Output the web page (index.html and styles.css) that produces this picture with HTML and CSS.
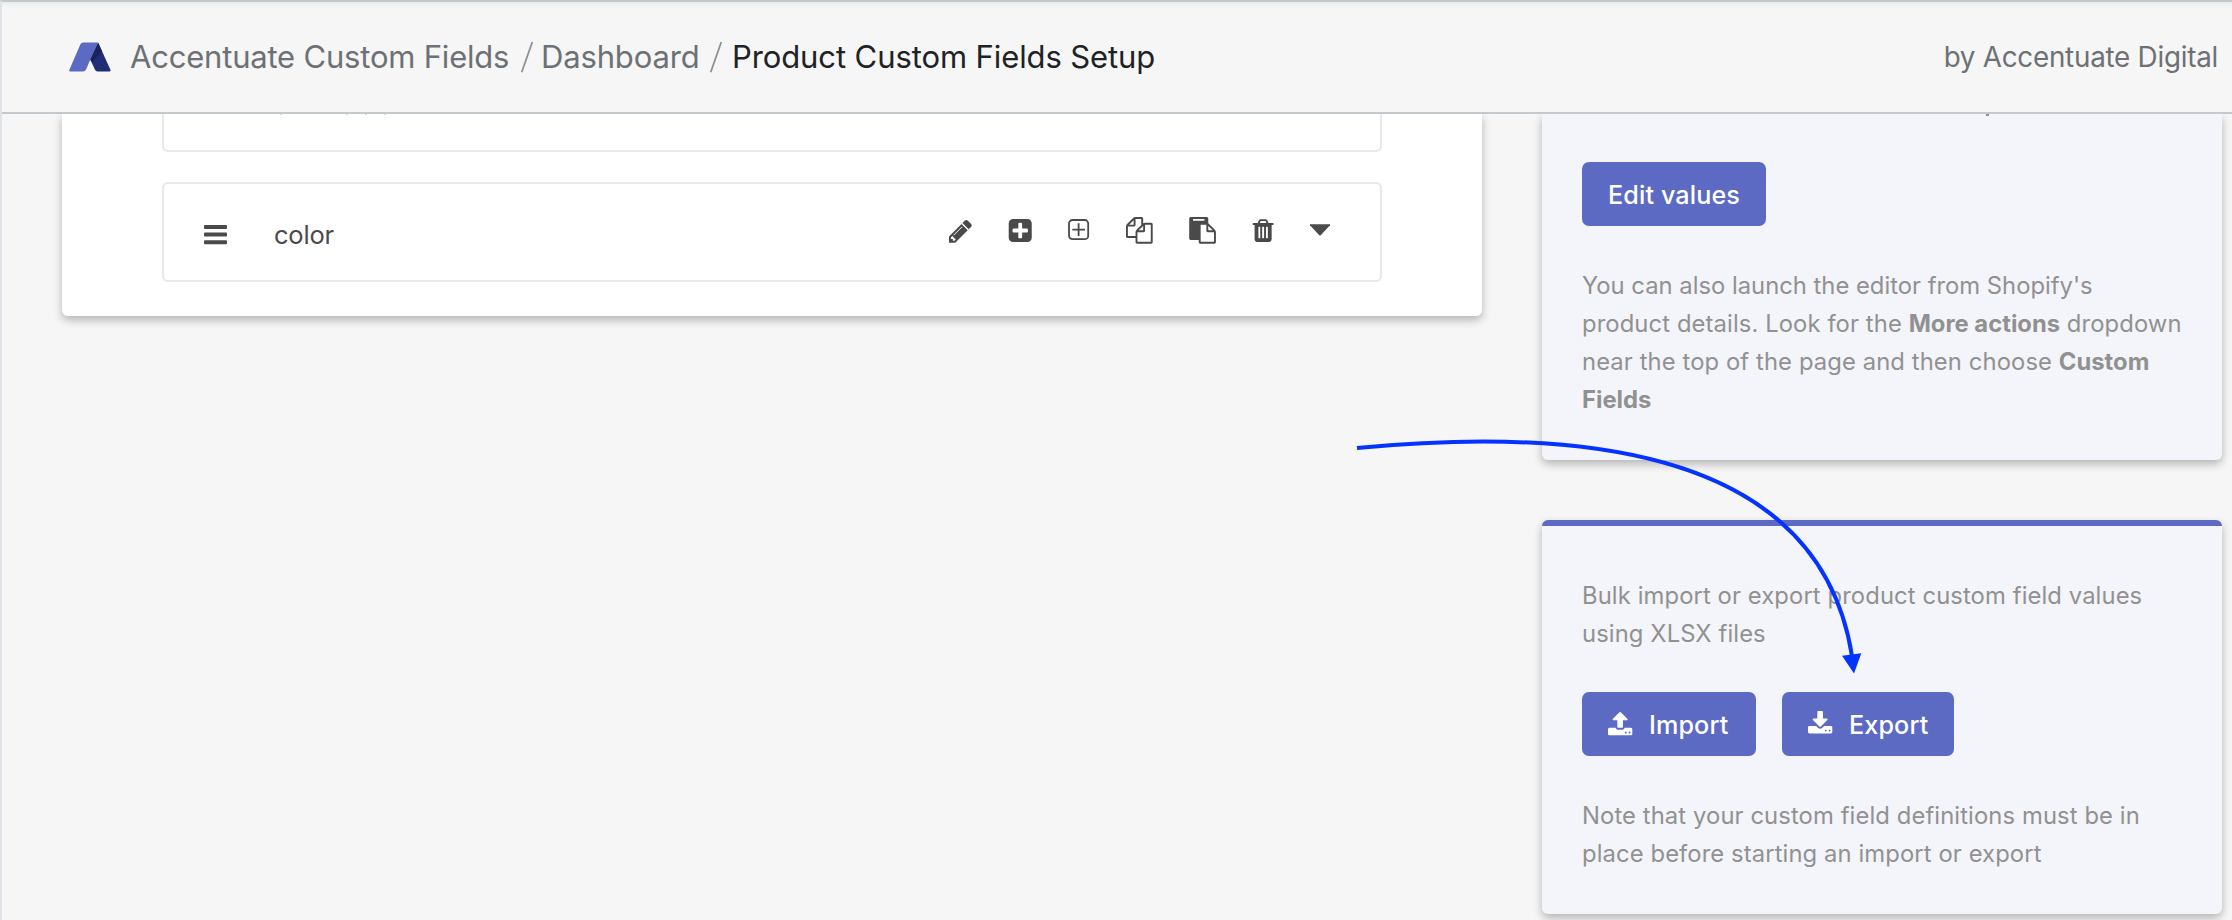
FILE: index.html
```
<!DOCTYPE html>
<html lang="en">
<head>
<meta charset="utf-8">
<title>Product Custom Fields Setup</title>
<link rel="stylesheet" href="styles.css">
</head>
<body>
<div class="app">
  <header class="topbar">
    <svg class="logo" width="44" height="32" viewBox="0 0 44 32">
      <path fill="#5c6ac4" d="M15.4 1.5H30.2L22.3 18.5 18.2 28.2Q17.2 30.5 15 30.5H2.8Q.6 30.5 1.5 28.4L12.3 3.600Q13.200 1.500 15.400 1.500Z"/>
      <path fill="#202e78" d="M30.200 1.800L42.300 28.400Q43.200 30.500 41 30.500H29.500Q27.800 30.500 27 28.700L22.300 18.500Z"/>
      <path fill="#1c2260" d="M30.200 1.800L34.200 10.800L23.600 21.300L22.300 18.500Z"/>
    </svg>
    <nav class="crumbs">
      <a class="crumb crumb-app">Accentuate Custom Fields</a>
      <svg class="slash" width="14" height="34" viewBox="0 0 14 34"><path d="M12.300 2L1.700 32.300"/></svg>
      <a class="crumb crumb-dash">Dashboard</a>
      <svg class="slash" width="14" height="34" viewBox="0 0 14 34"><path d="M12.300 2L1.700 32.300"/></svg>
      <span class="crumb current">Product Custom Fields Setup</span>
    </nav>
    <span class="vendor">by Accentuate Digital</span>
  </header>

  <main class="content">
    <section class="fields-card">
      <div class="field-row clipped"><i></i><i></i><i></i><i></i></div>
      <div class="field-row">
        <svg class="drag" width="23" height="20" viewBox="0 0 23 20"><rect width="23" height="4" rx="1"/><rect y="7.600" width="23" height="4" rx="1"/><rect y="15.200" width="23" height="4" rx="1"/></svg>
        <span class="field-name">color</span>
        <div class="tools">
          <svg viewBox="0 0 32 32"><path transform="translate(4 3.800) scale(.015)" d="M363 1536l91-91-235-235-91 91v107h128v128h107zM886 608q0-22-22-22-10 0-17 7l-542 542q-7 7-7 17 0 22 22 22 10 0 17-7l542-542q7-7 7-17zM832 416l416 416-832 832h-416v-416zM1515 512q0 53-37 90l-166 166-416-416 166-165q36-38 90-38 53 0 91 38l235 234q37 39 37 91z"/></svg>
          <svg viewBox="0 0 32 32"><path transform="translate(4.700 3.100) scale(.015)" d="M1280 960v-128q0-26-19-45t-45-19h-320v-320q0-26-19-45t-45-19h-128q-26 0-45 19t-19 45v320h-320q-26 0-45 19t-19 45v128q0 26 19 45t45 19h320v320q0 26 19 45t45 19h128q26 0 45-19t19-45v-320h320q26 0 45-19t19-45zM1536 416v960q0 119-84.500 203.500t-203.500 84.500h-960q-119 0-203.500-84.500t-84.500-203.500v-960q0-119 84.500-203.500t203.500-84.500h960q119 0 203.500 84.500t84.500 203.500z"/></svg>
          <svg viewBox="0 0 32 32"><g fill="none" stroke="#4a4a4a" stroke-width="1.800"><rect x="6" y="6" width="19.200" height="19.200" rx="3.500"/><path d="M9.300 15.600H22M15.600 9.300V22"/></g></svg>
          <svg viewBox="0 0 32 32"><path transform="translate(3 3) scale(.0149)" d="M1696 384q40 0 68 28t28 68v1216q0 40-28 68t-68 28h-960q-40 0-68-28t-28-68v-288h-544q-40 0-68-28t-28-68v-672q0-40 20-88t48-76l408-408q28-28 76-48t88-20h416q40 0 68 28t28 68v328q68-40 128-40h416zM1152 597l-299 299h299v-299zM512 213l-299 299h299v-299zM708 860l316-316v-416h-384v416q0 40-28 68t-68 28h-416v640h512v-256q0-40 20-88t48-76zM1664 1664v-1152h-384v416q0 40-28 68t-68 28h-416v640h896z"/></svg>
          <svg viewBox="0 0 32 32"><path transform="translate(2.200 3) scale(.0149)" d="M768 1664h896v-640h-416q-40 0-68-28t-28-68v-416h-384v1152zM1024 224v-64q0-13-9.500-22.500t-22.500-9.500h-704q-13 0-22.500 9.500t-9.500 22.500v64q0 13 9.500 22.500t22.500 9.500h704q13 0 22.500-9.500t9.500-22.500zM1280 896h299l-299-299v299zM1792 1024v672q0 40-28 68t-68 28h-960q-40 0-68-28t-28-68v-160h-544q-40 0-68-28t-28-68v-1344q0-40 28-68t68-28h1088q40 0 68 28t28 68v328q21 13 36 28l408 408q28 28 48 76t20 88z"/></svg>
          <svg viewBox="0 0 32 32"><path transform="translate(5.700 3.300) scale(.0148)" d="M512 1376v-704q0-14-9-23t-23-9h-64q-14 0-23 9t-9 23v704q0 14 9 23t23 9h64q14 0 23-9t9-23zM768 1376v-704q0-14-9-23t-23-9h-64q-14 0-23 9t-9 23v704q0 14 9 23t23 9h64q14 0 23-9t9-23zM1024 1376v-704q0-14-9-23t-23-9h-64q-14 0-23 9t-9 23v704q0 14 9 23t23 9h64q14 0 23-9t9-23zM480 384h448l-48-117q-7-9-17-11h-317q-10 2-17 11zM1408 416v64q0 14-9 23t-23 9h-96v948q0 83-47 143.500t-113 60.500h-832q-66 0-113-58.500t-47-141.500v-952h-96q-14 0-23-9t-9-23v-64q0-14 9-23t23-9h309l70-167q15-37 54-63t79-26h320q40 0 79 26t54 63l70 167h309q14 0 23 9t9 23z"/></svg>
          <svg viewBox="0 0 32 32"><path d="M6 10.300H26V11.300L16.700 21.300Q16 22 15.300 21.300L6 11.300Z"/></svg>
        </div>
      </div>
    </section>

    <aside class="side">
      <section class="side-card editor-card">
        <i class="tail"></i>
        <button class="btn edit">Edit values</button>
        <p><span class="first">You can also launch the editor from Shopify's</span><br>product details. Look for the <b>More actions</b> dropdown<br>near the top of the page and then choose <b>Custom<br>Fields</b></p>
      </section>
      <section class="side-card bulk-card">
        <p>Bulk import or export product custom field values<br>using XLSX files</p>
        <div class="actions">
          <button class="btn import"><svg width="25" height="27" viewBox="0 0 25 27"><path transform="scale(.0146)" d="M1280 1472q0-26-19-45t-45-19-45 19-19 45 19 45 45 19 45-19 19-45zM1536 1472q0-26-19-45t-45-19-45 19-19 45 19 45 45 19 45-19 19-45zM1664 1248v320q0 40-28 68t-68 28h-1472q-40 0-68-28t-28-68v-320q0-40 28-68t68-28h427q21 56 70.500 92t110.500 36h256q61 0 110.500-36t70.500-92h427q40 0 68 28t28 68zM1339 600q-17 40-59 40h-256v448q0 26-19 45t-45 19h-256q-26 0-45-19t-19-45v-448h-256q-42 0-59-40-17-39 14-69l448-448q18-19 45-19t45 19l448 448q31 30 14 69z"/></svg>Import</button>
          <button class="btn export"><svg width="25" height="27" viewBox="0 0 25 27"><path transform="scale(.0146)" d="M1280 1344q0-26-19-45t-45-19-45 19-19 45 19 45 45 19 45-19 19-45zM1536 1344q0-26-19-45t-45-19-45 19-19 45 19 45 45 19 45-19 19-45zM1664 1120v320q0 40-28 68t-68 28h-1472q-40 0-68-28t-28-68v-320q0-40 28-68t68-28h465l135 136q58 56 136 56t136-56l136-136h464q40 0 68 28t28 68zM1339 551q17 41-14 70l-448 448q-18 19-45 19t-45-19l-448-448q-31-29-14-70 17-39 59-39h256v-448q0-26 19-45t45-19h256q26 0 45 19t19 45v448h256q42 0 59 39z"/></svg>Export</button>
        </div>
        <p>Note that your custom field definitions must be in<br>place before starting an import or export</p>
      </section>
    </aside>
  </main>

  <svg class="arrow" width="520" height="250" viewBox="1350 430 520 250">
    <path d="M1357 448Q1812 404 1852 656" fill="none" stroke="#0433ff" stroke-width="4"/>
    <path d="M1842 655.700L1861.300 653.200L1854 673.500Z" fill="#0433ff"/>
  </svg>
</div>
</body>
</html>
```
FILE: styles.css
```
* { box-sizing: border-box; }

body {
  margin: 0;
  background: #f6f6f6;
  font-family: Inter, "Noto Sans", sans-serif;
}

.app {
  position: relative;
  display: flex;
  flex-direction: column;
  width: 2232px;
  height: 920px;
  overflow: hidden;
  border-top: 2px solid #c4c9cd;
  border-left: 2px solid #dfe3e8;
}

.topbar {
  display: flex;
  align-items: center;
  flex: none;
  height: 112px;
  padding: 0 14px 0 66px;
  border-bottom: 2px solid #c4c9ce;
  background: linear-gradient(#e9eaeb, #f6f6f6 5px);
}

.logo { flex: none; margin-right: 18px; }

.crumbs { display: flex; align-items: center; flex: 1; }

.crumb {
  font-size: 31px;
  line-height: 40px;
  letter-spacing: -0.15px;
  color: #6d7175;
  white-space: nowrap;
}

.crumb-app { width: 390px; letter-spacing: -0.2px; }
.crumb-dash { width: 168px; margin-left: 7px; }
.current { margin-left: 9px; letter-spacing: -0.1px; color: #202223; }

.slash {
  flex: none;
  fill: none;
  stroke: #8c9196;
  stroke-width: 1.8;
}

.vendor {
  font-size: 27.8px;
  line-height: 40px;
  letter-spacing: -0.25px;
  color: #6d7175;
}

.content {
  display: flex;
  align-items: flex-start;
  flex: 1;
  min-height: 0;
  padding-left: 60px;
  overflow: hidden;
}

.fields-card,
.side-card {
  box-shadow: 0 4px 10px rgba(0, 0, 0, .16), 0 4px 8px rgba(0, 0, 0, .12);
}

.fields-card {
  width: 1420px;
  height: 202px;
  padding: 0 100px;
  border-radius: 0 0 6px 6px;
  background: #fff;
}

.field-row {
  display: flex;
  height: 100px;
  padding: 0 35px 0 40px;
  border: 2px solid #e8e8e8;
  border-radius: 6px;
}

.field-row.clipped {
  height: 38px;
  margin-bottom: 30px;
  padding-left: 116px;
  border-top: 0;
  border-radius: 0 0 6px 6px;
}

.clipped i { width: 2px; height: 1px; margin-right: 17px; background: #dcdcdc; }
.clipped i:first-child { margin-right: 64px; }

.drag { margin-top: 41px; fill: #4a4a4a; }

.field-name {
  flex: 1;
  margin: 32px 0 0 47px;
  font-size: 25.5px;
  line-height: 38px;
  letter-spacing: -0.2px;
  color: #4a4a4a;
}

.tools {
  display: grid;
  grid-template-columns: 59px 59px 60px 64px 60px 57px 32px;
  height: 32px;
  margin-top: 30px;
  margin-right: 9px;
}

.tools svg { width: 32px; height: 32px; fill: #4a4a4a; }

.side {
  display: flex;
  flex-direction: column;
  gap: 60px;
  width: 680px;
  margin-left: 60px;
}

.side-card {
  display: flex;
  flex-direction: column;
  align-items: flex-start;
  gap: 40px;
  padding: 48px 40px 42px;
  border-radius: 0 0 6px 6px;
  background: #f4f5fb;
}

.bulk-card {
  padding-top: 51px;
  padding-bottom: 41px;
  border-top: 6px solid #5c6ac4;
  border-radius: 6px;
}

.editor-card { gap: 41px; padding-bottom: 41px; }
.bulk-card .actions { margin: -1px 0 1px; }

.side-card p {
  margin: 0;
  font-size: 23.8px;
  line-height: 38px;
  letter-spacing: 0.1px;
  color: #919191;
  white-space: nowrap;
}

.side-card b { font-weight: 700; letter-spacing: 0; }
.first { letter-spacing: 0; }

.tail {
  width: 3px;
  height: 2px;
  margin: -48px 0 5px 404px;
  background: #919191;
}

.btn {
  display: flex;
  align-items: center;
  height: 64px;
  padding: 2px 0 0 26px;
  border: 0;
  border-radius: 7px;
  background: #5c6ac4;
  color: #fff;
  font: 500 25.2px/38px Inter, sans-serif;
  letter-spacing: 0.1px;
}

.btn svg { flex: none; margin: -1px 16px 0 0; fill: #fff; }

.edit { width: 184px; }
.import { width: 174px; }
.export { width: 172px; }

.actions { display: flex; gap: 26px; }

.arrow {
  position: absolute;
  top: 428px;
  left: 1348px;
  pointer-events: none;
}
```
